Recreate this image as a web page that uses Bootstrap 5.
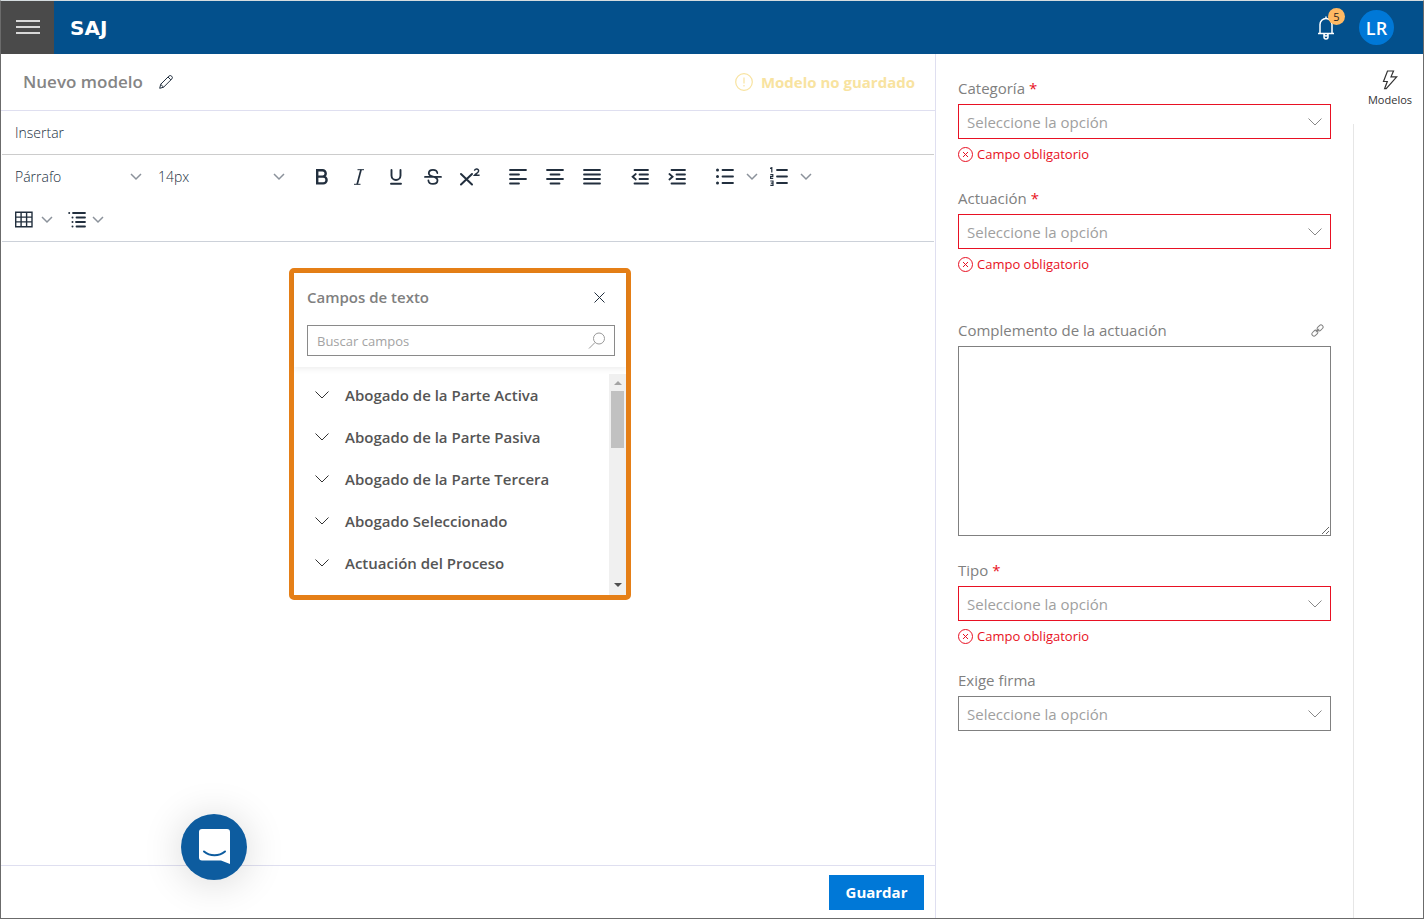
<!DOCTYPE html>
<html lang="es">
<head>
<meta charset="utf-8">
<meta name="viewport" content="width=device-width, initial-scale=1">
<title>SAJ - Nuevo modelo</title>
<link href="https://cdn.jsdelivr.net/npm/bootstrap@5.3.0/dist/css/bootstrap.min.css" rel="stylesheet">
<style>
  body { font-family: "Open Sans", "Noto Sans", sans-serif; font-size: 14px; line-height: 20px; color: #222f3e; background: #fff; }
  svg { display: block; flex: none; fill: none; stroke: currentColor; }
  button { color: inherit; }
  .app { border: 1px solid #6b6b6b; border-top-color: #d5dcdf; }
  .topbar { background: #03508c; height: 53px; padding-right: 29px; }
  .menu-btn { width: 53px; background: #4a4a4a; color: #d8d8d8; }
  .brand { font: bold 20px/20px "DejaVu Sans", sans-serif; }
  .avatar { width: 35px; height: 35px; background: #0078d7; font-size: 18px; font-weight: 600; }
  .count { top: -8px; left: 11px; width: 17px; height: 17px; background: #ffb963; color: #222; font-size: 11px; line-height: 17px; }
  .editor-col { border-right: 1px solid #dfdff0; }
  .title-row { height: 57px; border-bottom: 1px solid #dfdff0; padding: 0 20px 0 22px; }
  .title-row h1 { font-size: 17px; line-height: 24px; font-weight: 600; color: #858585; }
  .unsaved { font-size: 15px; font-weight: 700; color: #f8e3a0; }
  .insert-row { height: 44px; border-bottom: 1px solid #ccc; padding-left: 13px; margin: 0 1px; }
  .insert-row button, .flat-select { font-weight: 300; }
  .tools { border-bottom: 1px solid #ccd1d9; margin: 0 1px; }
  .tool-line { height: 43px; column-gap: 11px; }
  .tool { width: 37px; height: 34px; }
  .flat-select { width: 143px; height: 34px; padding: 0 0 0 13px; border: 0; color: #222f3e; background: transparent url("data:image/svg+xml,%3Csvg xmlns='http://www.w3.org/2000/svg' width='12' height='8' fill='none' stroke='%238b929b' stroke-width='1.5'%3E%3Cpath d='M1 1l5 5 5-5'/%3E%3C/svg%3E") no-repeat right 3px center; appearance: none; }
  .chev { color: #8b929b; stroke-width: 1.5; }
  .fields { width: 342px; border: 5px solid #e57f17; border-radius: 5px; background: #fff; margin-top: 26px; }
  .fields-head { height: 94px; padding: 14px 11px 0 13px; box-shadow: 0 2px 6px rgba(0,0,0,.07); }
  .fields h2 { font-size: 15px; line-height: 20px; font-weight: 600; color: #808080; }
  .search { height: 31px; border: 1px solid #8a8a8a; margin-top: 18px; padding: 0 8px 0 9px; color: #999; }
  .search input { font-size: 13px; color: #555; outline: 0; }
  .search input::placeholder { color: #a3a3a3; opacity: 1; }
  .fields-body { height: 221px; margin-top: 7px; }
  .field-item { height: 42px; padding: 0 0 0 21px; gap: 16px; font-size: 15px; font-weight: 600; color: #555; }
  .field-item svg { color: #333; }
  .bar { width: 17px; background: #f0f0f0; padding: 6px 2px; }
  .thumb { height: 57px; background: #c1c1c1; }
  .footer-row { height: 53px; border-top: 1px solid #dfdff0; padding-right: 11px; }
  .save { width: 95px; height: 35px; background: #0078d7; font-size: 15px; font-weight: 700; }
  .chat { left: 181px; bottom: 39px; width: 66px; height: 66px; background: #0d5c9f; box-shadow: 0 3px 40px rgba(0,0,0,.16); }
  .form-col { width: 417px; padding: 24px 22px; color: #808080; }
  .form-col label { font-size: 15px; line-height: 20px; }
  .req { color: #e81123; }
  .group { margin-bottom: 24px; }
  .group-apart { margin-top: 46px; }
  .pick { height: 35px; padding: 0 8px; border: 1px solid #808080; border-radius: 0; margin-top: 6px; font-size: 15px; color: #a0a0a0; background: #fff url("data:image/svg+xml,%3Csvg xmlns='http://www.w3.org/2000/svg' width='14' height='8' fill='none' stroke='%23888'%3E%3Cpath d='M.5 .5l6.500 6.500 6.500-6.500'/%3E%3C/svg%3E") no-repeat right 8px center; appearance: none; }
  .pick.bad { border-color: #e81123; }
  .err { margin-top: 5px; gap: 4px; color: #e81123; font-size: 13px; line-height: 20px; }
  .note { height: 190px; margin-top: 6px; border: 1px solid #808080; border-radius: 0; }
  .rail { width: 70px; }
  .rail-btn { height: 70px; padding-top: 16px; gap: 2px; font-size: 11px; line-height: 16px; color: #333; }
  .rail-line { border-left: 1px solid #e6e6e6; }
</style>
</head>
<body>
<div class="app d-flex flex-column min-vh-100">
  <header class="topbar d-flex align-items-center text-white">
    <button class="menu-btn border-0 h-100 d-flex align-items-center justify-content-center p-0" type="button" aria-label="Menú">
      <svg width="24" height="16" stroke-width="2"><path d="M0 1h24M0 7h24M0 13h24"/></svg>
    </button>
    <span class="brand ms-3 me-auto">SAJ</span>
    <button class="position-relative border-0 bg-transparent p-0 me-4" type="button" aria-label="Notificaciones">
      <svg width="18" height="24" stroke-width="1.500"><path d="M1 17.500h16M3 17V8.500a6 6 0 0 1 12 0V17M9 2.500V.5M7 18a2 2 0 0 0 4 0v3a2 2 0 0 1-4 0z"/></svg>
      <span class="count position-absolute rounded-circle text-center">5</span>
    </button>
    <button class="avatar border-0 rounded-circle p-0 text-white" type="button">LR</button>
  </header>

  <div class="d-flex flex-grow-1">
    <main class="editor-col d-flex flex-column flex-grow-1">
      <div class="title-row d-flex align-items-center">
        <h1 class="m-0">Nuevo modelo</h1>
        <button class="border-0 bg-transparent p-0 ms-3" type="button" aria-label="Editar nombre">
          <svg width="14" height="14" stroke="#444"><path d="M.7 13.300l1-4L9.800 1.200a1.900 1.900 0 0 1 2.900 2.900L4.600 12.200zM9 2l2.900 2.900M1.700 9.300l2.900 2.900"/></svg>
        </button>
        <div class="unsaved d-flex align-items-center gap-2 ms-auto">
          <svg width="18" height="18" stroke-width="1.200"><circle cx="9" cy="9" r="8.300"/><path d="M9 4.500v6M9 12v1.500"/></svg>
          <span>Modelo no guardado</span>
        </div>
      </div>
      <div class="insert-row d-flex align-items-center"><button class="border-0 bg-transparent p-0" type="button">Insertar</button></div>

      <div class="tools">
        <div class="tool-line d-flex align-items-center">
          <div class="d-flex me-1">
            <select class="flat-select" aria-label="Formato"><option>Párrafo</option></select>
            <select class="flat-select" aria-label="Tamaño"><option>14px</option></select>
          </div>
          <div class="d-flex">
            <button class="tool border-0 bg-transparent p-0 d-flex align-items-center justify-content-center" type="button" aria-label="Negrita"><svg width="16" height="18" stroke-width="2.400"><path d="M3.200 2.200h5.300a3.200 3.200 0 0 1 0 6.400H3.200zM3.200 8.600h6a3.400 3.400 0 0 1 0 6.800h-6z"/></svg></button>
            <button class="tool border-0 bg-transparent p-0 d-flex align-items-center justify-content-center" type="button" aria-label="Cursiva"><svg width="12" height="18"><path d="M4.500 1.700H11M1 16.300h6.500"/><path stroke-width="1.700" d="M8 1.700L4.200 16.300"/></svg></button>
            <button class="tool border-0 bg-transparent p-0 d-flex align-items-center justify-content-center" type="button" aria-label="Subrayado"><svg width="14" height="18" stroke-width="1.900" stroke-linecap="round"><path d="M2.500 2v5.500a4.500 4.500 0 0 0 9 0V2M2 15.800h10"/></svg></button>
            <button class="tool border-0 bg-transparent p-0 d-flex align-items-center justify-content-center" type="button" aria-label="Tachado"><svg width="18" height="18" stroke-width="1.800" stroke-linecap="round"><path d="M13.300 5C13 2.700 11 1.900 9 1.900S4.800 3 4.800 5.300C4.800 7.200 6.500 8 9 8.700s4.500 1.500 4.500 3.600c0 2.500-2.300 3.600-4.500 3.600s-4.400-1-4.600-3.400M1 8.900h16"/></svg></button>
            <button class="tool border-0 bg-transparent p-0 d-flex align-items-center justify-content-center" type="button" aria-label="Superíndice"><svg width="22" height="20" stroke-width="2"><path stroke-linecap="round" d="M2 7l11 10.500M13 7L2 17.500"/><path stroke-width="1.500" d="M15.500 3.800c.2-2.700 4.300-2.400 4.100.2-.1 1.700-2.300 2.500-4 4.200h5"/></svg></button>
          </div>
          <div class="d-flex">
            <button class="tool border-0 bg-transparent p-0 d-flex align-items-center justify-content-center" type="button" aria-label="Alinear a la izquierda"><svg width="18" height="18" stroke-width="1.800" stroke-linecap="round"><path d="M1 2h16M1 6.500h9M1 11h16M1 15.500h9"/></svg></button>
            <button class="tool border-0 bg-transparent p-0 d-flex align-items-center justify-content-center" type="button" aria-label="Centrar"><svg width="18" height="18" stroke-width="1.800" stroke-linecap="round"><path d="M1 2h16M4.500 6.500h9M1 11h16M4.500 15.500h9"/></svg></button>
            <button class="tool border-0 bg-transparent p-0 d-flex align-items-center justify-content-center" type="button" aria-label="Justificar"><svg width="18" height="18" stroke-width="1.800" stroke-linecap="round"><path d="M1 2h16M1 6.500h16M1 11h16M1 15.500h16"/></svg></button>
          </div>
          <div class="d-flex">
            <button class="tool border-0 bg-transparent p-0 d-flex align-items-center justify-content-center" type="button" aria-label="Reducir sangría"><svg width="18" height="18" stroke-width="1.800" stroke-linecap="round"><path d="M3.500 2H17M8.500 6.500H17M8.500 11H17M3.500 15.500H17M4.800 6L1.600 8.700l3.200 2.800"/></svg></button>
            <button class="tool border-0 bg-transparent p-0 d-flex align-items-center justify-content-center" type="button" aria-label="Aumentar sangría"><svg width="18" height="18" stroke-width="1.800" stroke-linecap="round"><path d="M3.500 2H17M8.500 6.500H17M8.500 11H17M3.500 15.500H17M1.400 6L4.600 8.700l-3.200 2.800"/></svg></button>
          </div>
          <div class="d-flex">
            <button class="border-0 bg-transparent py-2 ps-2 pe-0 d-flex align-items-center gap-2" type="button" aria-label="Viñetas"><svg class="me-1" width="20" height="18" stroke-width="1.800" stroke-linecap="round"><path d="M8.500 2H19M8.500 8.500H19M8.500 15H19"/><path stroke-width="3" d="M3.500 2h.01M3.500 8.500h.01M3.500 15h.01"/></svg><svg class="chev" width="12" height="8"><path d="M1 1l5 5 5-5"/></svg></button>
            <button class="border-0 bg-transparent py-2 ps-2 ms-1 pe-0 d-flex align-items-center gap-2" type="button" aria-label="Numeración"><svg class="me-1" width="18" height="20" stroke-width="1.800" stroke-linecap="round"><path d="M7 3h10M7 9.500h10M7 16h10"/><path stroke-width="1.200" stroke-linecap="butt" d="M0 1.500l1.800-.8V5.500M.3 7.500h2.500v1.800H.6v2.100h2.600M.3 14h2.700v4.400H.3M.8 16.200h2"/></svg><svg class="chev" width="12" height="8"><path d="M1 1l5 5 5-5"/></svg></button>
          </div>
        </div>
        <div class="tool-line d-flex align-items-center">
          <button class="border-0 bg-transparent py-2 pe-1 ps-0 ms-2 d-flex align-items-center gap-2" type="button" aria-label="Tabla"><svg class="ms-1" width="19" height="18" stroke-width="1.400"><path d="M1.700 1.200h16.300v14.600H1.700zM1.700 6.100h16.300M1.700 10.900h16.300M7.100 1.200v14.600M12.600 1.200v14.600"/></svg><svg class="chev" width="12" height="8"><path d="M1 1l5 5 5-5"/></svg></button>
          <button class="border-0 bg-transparent p-0 d-flex align-items-center" type="button" aria-label="Lista multinivel"><svg class="me-1" width="20" height="18" stroke-width="1.800" stroke-linecap="round"><path d="M5 2h12M8.500 6.500H17M8 11h9M8.500 15.500H17"/><path stroke-width="2" d="M1.200 2h.01M4.500 6.500h.01M4.500 11h.01M4.500 15.500h.01"/></svg><svg class="chev" width="12" height="8"><path d="M1 1l5 5 5-5"/></svg></button>
        </div>
      </div>

      <div class="flex-grow-1 d-flex justify-content-center align-items-start pe-3">
        <section class="fields">
          <div class="fields-head">
            <div class="d-flex align-items-center justify-content-between">
              <h2 class="m-0">Campos de texto</h2>
              <button class="border-0 bg-transparent p-0 me-2" type="button" aria-label="Cerrar"><svg width="15" height="11" stroke="#222"><path d="M2.500 .5l10 10M12.500 .5l-10 10"/></svg></button>
            </div>
            <div class="search d-flex align-items-center">
              <input class="border-0 p-0 flex-grow-1" type="text" placeholder="Buscar campos" aria-label="Buscar campos">
              <svg width="18" height="18"><circle cx="11" cy="6.500" r="5.500"/><path d="M7 10.500L1 16.500"/></svg>
            </div>
          </div>
          <div class="fields-body d-flex overflow-hidden">
            <div class="flex-grow-1">
              <button class="field-item border-0 bg-transparent w-100 d-flex align-items-center" type="button"><svg width="14" height="8"><path d="M.5 .5L7 7 13.500 .5"/></svg>Abogado de la Parte Activa</button>
              <button class="field-item border-0 bg-transparent w-100 d-flex align-items-center" type="button"><svg width="14" height="8"><path d="M.5 .5L7 7 13.500 .5"/></svg>Abogado de la Parte Pasiva</button>
              <button class="field-item border-0 bg-transparent w-100 d-flex align-items-center" type="button"><svg width="14" height="8"><path d="M.5 .5L7 7 13.500 .5"/></svg>Abogado de la Parte Tercera</button>
              <button class="field-item border-0 bg-transparent w-100 d-flex align-items-center" type="button"><svg width="14" height="8"><path d="M.5 .5L7 7 13.500 .5"/></svg>Abogado Seleccionado</button>
              <button class="field-item border-0 bg-transparent w-100 d-flex align-items-center" type="button"><svg width="14" height="8"><path d="M.5 .5L7 7 13.500 .5"/></svg>Actuación del Proceso</button>
            </div>
            <div class="bar d-flex flex-column">
              <svg class="mx-auto mb-1" width="8" height="7"><path d="M0 5l4-4 4 4z" fill="#a3a3a3" stroke="none"/></svg>
              <div class="thumb"></div>
              <svg class="mx-auto mt-auto" width="8" height="7"><path d="M0 1l4 4 4-4z" fill="#505050" stroke="none"/></svg>
            </div>
          </div>
        </section>
      </div>

      <div class="footer-row d-flex align-items-center justify-content-end">
        <button class="save border-0 text-white p-0" type="button">Guardar</button>
      </div>
    </main>

    <form class="form-col flex-shrink-0">
      <div class="group">
        <label class="d-block" for="categoria">Categoría <span class="req">*</span></label>
        <select class="pick bad w-100 d-block" id="categoria"><option>Seleccione la opción</option></select>
        <div class="err d-flex align-items-center"><svg width="15" height="15"><circle cx="7.500" cy="7.500" r="7"/><path d="M5 5l5 5M10 5l-5 5"/></svg>Campo obligatorio</div>
      </div>
      <div class="group">
        <label class="d-block" for="actuacion">Actuación <span class="req">*</span></label>
        <select class="pick bad w-100 d-block" id="actuacion"><option>Seleccione la opción</option></select>
        <div class="err d-flex align-items-center"><svg width="15" height="15"><circle cx="7.500" cy="7.500" r="7"/><path d="M5 5l5 5M10 5l-5 5"/></svg>Campo obligatorio</div>
      </div>
      <div class="group group-apart">
        <div class="d-flex align-items-center justify-content-between">
          <label for="complemento">Complemento de la actuación</label>
          <button class="border-0 bg-transparent p-0 me-1" type="button" aria-label="Vincular"><svg width="16" height="13" stroke="#777"><g transform="rotate(-45 6.500 6.500)"><rect x="-.5" y="4.400" width="6.500" height="4.200" rx="2.100"/><rect x="7" y="4.400" width="6.500" height="4.200" rx="2.100"/><path d="M4 6.500h5"/></g></svg></button>
        </div>
        <textarea class="note w-100 d-block" id="complemento"></textarea>
      </div>
      <div class="group">
        <label class="d-block" for="tipo">Tipo <span class="req">*</span></label>
        <select class="pick bad w-100 d-block" id="tipo"><option>Seleccione la opción</option></select>
        <div class="err d-flex align-items-center"><svg width="15" height="15"><circle cx="7.500" cy="7.500" r="7"/><path d="M5 5l5 5M10 5l-5 5"/></svg>Campo obligatorio</div>
      </div>
      <div>
        <label class="d-block" for="firma">Exige firma</label>
        <select class="pick w-100 d-block" id="firma"><option>Seleccione la opción</option></select>
      </div>
    </form>

    <aside class="rail d-flex flex-column flex-shrink-0">
      <button class="rail-btn border-0 bg-transparent ps-1 pe-0 pb-0 d-flex flex-column align-items-center" type="button">
        <svg width="16" height="20" stroke-width="1.200"><path d="M5.500 1h6L9 6.800h5.700L4.200 18.700H2.600L5.300 11.500H1.500z"/></svg>
        Modelos
      </button>
      <div class="rail-line flex-grow-1"></div>
    </aside>
  </div>
</div>
<button class="chat position-fixed border-0 rounded-circle p-0 d-flex align-items-center justify-content-center" type="button" aria-label="Chat">
  <svg width="32" height="36"><path fill="#fff" stroke="none" d="M4 0h25a3 3 0 0 1 3 3v32l-9-3.500H4a3 3 0 0 1-3-3V3a3 3 0 0 1 3-3z"/><path stroke="#0d5c9f" stroke-width="2" stroke-linecap="round" d="M6 22.500c6 5 15 5 21 0"/></svg>
</button>
<script src="https://cdn.jsdelivr.net/npm/bootstrap@5.3.0/dist/js/bootstrap.bundle.min.js"></script>
</body>
</html>
